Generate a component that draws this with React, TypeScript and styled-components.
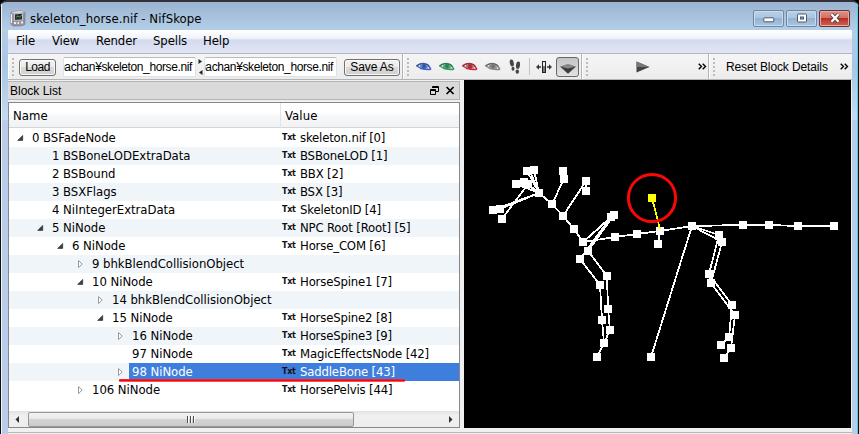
import React from 'react';
import styled, { createGlobalStyle, css } from 'styled-components';

const Global = createGlobalStyle`
  * { box-sizing: border-box; }
  body { margin: 0; overflow: hidden; background: #000; }
  svg { display: block; flex: none; }
`;

const ui = css`font-family: 'DejaVu Sans Condensed', 'DejaVu Sans', sans-serif; font-stretch: condensed;`;
const gothic = css`font-family: 'Liberation Sans', 'Noto Sans CJK JP', sans-serif;`;

const Window = styled.div`
  width: 859px;
  height: 434px;
  padding: 0 7px 0 8px;
  border-top: 2px solid #35313a;
  border-radius: 7px 7px 0 0;
  background:
    linear-gradient(#111, #111) 0 0 / 1px 100% no-repeat,
    linear-gradient(#eef4fb, #eef4fb) 1px 0 / 1px 100% no-repeat,
    linear-gradient(#111, #111) 858px 0 / 1px 100% no-repeat,
    linear-gradient(#4cd2e6, #4cd2e6) 857px 0 / 1px 100% no-repeat,
    linear-gradient(#9ab4d1 0, #b5cee7 28px, #a9c6e4 65px, #c5dbef 117px, #b9cde8 119px, #b9cde8 100%);
`;

const TitleBar = styled.div`
  height: 28px;
  display: flex;
  align-items: center;
  padding: 4px 2px 0 2px;
`;

const Title = styled.div`
  ${ui}
  font-size: 13px;
  line-height: 18px;
  letter-spacing: 0.07px;
  flex: 1;
  margin-left: 4px;
  padding-top: 2px;
  white-space: nowrap;
`;

const Caption = styled.button<{ $close?: boolean }>`
  width: 31px;
  height: 17px;
  margin: 0 0 0 2px;
  padding: 0;
  display: flex;
  align-items: center;
  justify-content: center;
  border: 1px solid ${p => (p.$close ? '#6d3038' : '#6c87a5')};
  border-radius: 2px;
  box-shadow: inset 0 0 0 1px ${p => (p.$close ? '#e5a9a0' : '#c9dcee')};
  background: ${p => (p.$close
    ? 'linear-gradient(#dc9388 0, #cf6f62 48%, #b93023 50%, #cc6554 100%)'
    : 'linear-gradient(#b9d0e7 0, #abc5df 48%, #94b1cf 50%, #a9c6e2 100%)')};
`;

const MenuBar = styled.div`
  height: 24px;
  display: flex;
  gap: 16px;
  padding: 2px 0 0 8px;
  border-bottom: 1px solid #b2b5c8;
  background: linear-gradient(#fff 0, #f0f3fa 8px, #e6eaf5 9px, #d5dbee 10px, #dfe4f4 22px);
`;

const MenuItem = styled.span<{ $w: number }>`
  ${ui}
  font-size: 13px;
  line-height: 18px;
  letter-spacing: -0.1px;
  width: ${p => p.$w}px;
  white-space: nowrap;
`;

const ToolRow = styled.div`
  height: 26px;
  display: flex;
  border-bottom: 1px solid #b4b4b4;
  background: linear-gradient(#f5f5f5, #ececec);
`;

const Bar = styled.div<{ $w: number }>`
  width: ${p => p.$w}px;
  height: 25px;
  display: flex;
  align-items: center;
  padding-left: 4px;
  border-right: 1px solid #b4b4b4;
  box-shadow: inset 1px 0 #fff;
  &:last-child { border-right: 0; }
`;

const Grip = styled.div`
  width: 2px;
  height: 18px;
  flex: none;
  margin-right: 1px;
  background: repeating-linear-gradient(#bcbcbc 0 2px, transparent 2px 4px);
`;

const PushButton = styled.button<{ $w: number; $ml: number; $ls: number }>`
  ${gothic}
  width: ${p => p.$w}px;
  height: 17px;
  flex: none;
  margin: 1px 0 0 ${p => p.$ml}px;
  padding: 0;
  font-size: 12px;
  line-height: 14px;
  letter-spacing: ${p => p.$ls}px;
  color: #000;
  border: 1px solid #707070;
  border-radius: 3px;
  box-shadow: inset 0 0 0 1px #fafafa;
  background: linear-gradient(#f2f2f2 0, #ebebeb 48%, #dadada 50%, #cfcfcf 100%);
`;

const PathInput = styled.div<{ $w: number; $ml: number }>`
  ${gothic}
  width: ${p => p.$w}px;
  height: 20px;
  flex: none;
  margin-left: ${p => p.$ml}px;
  padding-right: 3px;
  display: flex;
  justify-content: flex-end;
  overflow: hidden;
  font-size: 12px;
  line-height: 19px;
  letter-spacing: -0.38px;
  white-space: nowrap;
  color: #000;
  background: #fff;
  border: 1px solid #dfe3e8;
  border-top-color: #b8bac0;
  border-radius: 2px;
`;

const Slot = styled.div<{ $ml: number }>`margin-left: ${p => p.$ml}px;`;

const Divider = styled.div`
  width: 1px;
  height: 17px;
  margin-left: 8px;
  background: #c3c3c3;
`;

const Toggle = styled.div`
  width: 23px;
  height: 20px;
  margin-left: 4px;
  display: flex;
  align-items: center;
  justify-content: center;
  padding-top: 5px;
  border: 1px solid #686868;
  border-radius: 3px;
  background: linear-gradient(#c4c4c4, #e3e3e3);
`;

const Action = styled.span`
  ${gothic}
  font-size: 12px;
  letter-spacing: -0.12px;
  margin-left: 10px;
  width: 112px;
  white-space: nowrap;
`;

const Content = styled.div`
  height: 350px;
  display: flex;
  background: #f0f0f0;
`;

const Dock = styled.div`
  width: 456px;
  padding: 1px 4px 0 0;
  display: flex;
  flex-direction: column;
`;

const DockTitle = styled.div`
  ${gothic}
  height: 19px;
  display: flex;
  align-items: center;
  padding: 0 4px 0 2px;
  font-size: 12px;
  color: #000;
  background: #dadada;
  border: 1px solid #b5b5b5;
  border-left: 0;
  span { flex: 1; }
`;

const Tree = styled.div`
  ${ui}
  position: relative;
  margin-top: 2px;
  height: 326px;
  font-size: 13px;
  letter-spacing: -0.04px;
  color: #000;
  background: #fff;
  border: 1px solid #828790;
`;

const Columns = styled.div`
  height: 25px;
  display: grid;
  grid-template-columns: 271px 1fr;
  font-size: 13px;
  line-height: 25px;
  letter-spacing: 0.1px;
  border-bottom: 1px solid #d5d5d5;
  background: linear-gradient(#fff 0, #fff 45%, #f7f8fa 50%, #f1f2f4 100%);
  span { padding-left: 4px; }
  span + span { border-left: 1px solid #e0e3e8; }
`;

const Rows = styled.div`padding-top: 1px; height: 283px;`;

const Row = styled.div<{ $alt: boolean }>`
  height: 18px;
  display: grid;
  grid-template-columns: 271px 1fr;
  line-height: 17px;
  white-space: nowrap;
  background: ${p => (p.$alt ? '#f0f5fa' : '#fff')};
`;

const NameCell = styled.div<{ $depth: number }>`
  display: flex;
  padding-left: ${p => p.$depth * 20}px;
`;

const Expander = styled.div`
  width: 20px;
  padding: 4px 0 0 8px;
`;

const Label = styled.div<{ $on?: boolean }>`
  flex: 1;
  padding-left: 3px;
  ${p => p.$on && 'background: #3e7fde; color: #fff;'}
`;

const ValueCell = styled.div<{ $on?: boolean }>`
  display: flex;
  gap: 4px;
  letter-spacing: -0.17px;
  ${p => p.$on && 'background: #3e7fde; color: #fff;'}
`;

const TextTag = styled.b`
  font: bold 8px/17px 'DejaVu Sans', sans-serif;
  font-stretch: normal;
  letter-spacing: -0.3px;
  width: 14px;
  margin-left: 2px;
  color: #111;
`;

const Underline = styled.div`
  position: absolute;
  left: 110px;
  top: 276px;
  width: 286px;
  height: 3px;
  border-radius: 1px;
  background: linear-gradient(#f23a50, #fa0008 40%, #fa0008 60%, #ff8a8a);
`;

const ScrollBar = styled.div`
  height: 16px;
  display: flex;
  align-items: center;
  justify-content: space-between;
  padding: 0 6px;
  background: linear-gradient(#e3e3e3, #f0f0f0 30%, #ededed);
`;

const Thumb = styled.div`
  flex: 1;
  height: 15px;
  margin: 0 94px 0 8px;
  display: flex;
  align-items: center;
  justify-content: center;
  gap: 1px;
  border: 1px solid #979797;
  border-radius: 2px;
  background: linear-gradient(#f4f4f4 0, #e7e7e7 48%, #d4d4d4 50%, #cacaca 100%);
`;

const Ridge = styled.i`
  width: 2px;
  height: 7px;
  border-left: 1px solid #4b4b4b;
  border-right: 1px solid #fff;
`;

const Viewport = styled.div`
  width: 387px;
  height: 348px;
  background: #000;
`;

const Footer = styled.div`
  height: 4px;
  background: linear-gradient(#f0f0f0 0 2px, #b8b8b8 2px 3px, #f0f0f0 3px);
`;

function Eye({ color }: { color: string }) {
  return (
    <svg width="16" height="10" viewBox="0 0 16 10">
      <path d="M.8 4Q4 1.6 8 1.8T13 4.8L14.8 7.4Q9 8 5 6.8Q3 5 .8 4Z" fill="#e9eeee" />
      <ellipse cx="8" cy="4.6" rx="2.6" ry="2.8" fill={color} />
      <path d="M4.9 3v3.2M11 3.4v3.4" stroke="#3d5058" strokeWidth=".9" />
      <path d="M.4 4Q4.5 1.2 8.5 1.7T13.3 4.9L15 7.4" fill="none" stroke={color} strokeWidth="1.5" />
      <path d="M.4 4Q4.5 1.2 8.5 1.7T13.3 4.9" fill="none" stroke="#3c4448" strokeWidth="1" opacity=".6" />
      <path d="M.8 4.2Q3.4 5.2 5 6.7Q9 7.9 15 7.3" stroke={color} strokeWidth="1.3" fill="none" />
      <path d="M7.4 3h1.3v2.4H7.4z" fill="#26383e" opacity=".5" />
    </svg>
  );
}

function Chevrons() {
  return (
    <svg width="9" height="7" viewBox="0 0 9 7" fill="none" stroke="#000" strokeWidth="1.4">
      <path d="M.7.7l2.8 2.8L.7 6.3M4.7.7l2.8 2.8-2.8 2.8" />
    </svg>
  );
}

function Branch({ state }: { state?: string }) {
  if (!state) return null;
  return (
    <svg width="8" height="10" viewBox="0 0 8 10">
      {state === 'open'
        ? <path d="M5.7 2.4v5H.7Z" fill="#404040" stroke="#222" strokeWidth=".6" />
        : <path d="M1.5 1.6v7L5.2 5.1Z" fill="#fff" stroke="#9a9a9a" />}
    </svg>
  );
}

type Item = [number, string, string?, string?];
const items: Item[] = [
  [0, '0 BSFadeNode', 'skeleton.nif [0]', 'open'],
  [1, '1 BSBoneLODExtraData', 'BSBoneLOD [1]'],
  [1, '2 BSBound', 'BBX [2]'],
  [1, '3 BSXFlags', 'BSX [3]'],
  [1, '4 NiIntegerExtraData', 'SkeletonID [4]'],
  [1, '5 NiNode', 'NPC Root [Root] [5]', 'open'],
  [2, '6 NiNode', 'Horse_COM [6]', 'open'],
  [3, '9 bhkBlendCollisionObject', undefined, 'closed'],
  [3, '10 NiNode', 'HorseSpine1 [7]', 'open'],
  [4, '14 bhkBlendCollisionObject', undefined, 'closed'],
  [4, '15 NiNode', 'HorseSpine2 [8]', 'open'],
  [5, '16 NiNode', 'HorseSpine3 [9]', 'closed'],
  [5, '97 NiNode', 'MagicEffectsNode [42]'],
  [5, '98 NiNode', 'SaddleBone [43]', 'closed'],
  [3, '106 NiNode', 'HorsePelvis [44]', 'closed'],
];

const bones = [
  '539,193 527,171', '539,193 534,170', '539,193 530,171', '539,193 516,184', '539,193 524,182', '539,193 528,184',
  '539,193 500,209 493,210', '539,193 493,210', '528,184 502,219',
  '539,193 552,204 563,216 574,229 583,242', '552,204 564,179 563,171', '563,216 586,181 586,191',
  '583,242 615,237 637,234 660,231 692,226', '692,226 743,225 769,225 798,226 834,226',
  '583,242 611,217', '583,242 614,215', '588,251 614,215', '580,259 611,217',
  '588,251 607,276 608,309 610,330 604,343', '580,259 600,285 602,320 604,343 597,357',
  '660,231 658,244', '692,226 651,357', '692,226 719,235 709,274 732,305 729,337 721,345',
  '692,226 722,242 711,283 735,315 731,348 724,358', '692,226 719,235 722,242', '709,274 711,283',
];

const joints: [number, number][] = [
  [527, 171], [534, 170], [516, 184], [524, 182], [528, 184], [539, 193], [493, 210], [500, 209], [502, 219],
  [552, 204], [563, 171], [564, 179], [586, 181], [586, 191], [563, 216], [574, 229], [583, 242], [611, 217],
  [614, 215], [588, 251], [580, 259], [615, 237], [637, 234], [660, 231], [658, 244], [607, 276], [600, 285],
  [608, 309], [602, 320], [610, 330], [604, 343], [597, 357], [651, 357], [692, 226], [743, 225], [769, 225],
  [798, 226], [834, 226], [719, 235], [722, 242], [709, 274], [711, 283], [732, 305], [735, 315], [729, 337],
  [731, 348], [721, 345], [724, 358],
];

function Skeleton() {
  return (
    <svg width="387" height="348" viewBox="464 80 387 348" shapeRendering="crispEdges">
      <g fill="none" stroke="#fff" strokeWidth="1.8">
        {bones.map((b, i) => <polyline key={i} points={b} />)}
      </g>
      {joints.map(([x, y], i) => <rect key={i} x={x - 4} y={y - 4} width="8" height="8" fill="#fff" />)}
      <path d="M652 198L660 229" stroke="#ff0" strokeWidth="1.8" />
      <rect x="648" y="194" width="8" height="8" fill="#ff0" />
      <circle cx="652" cy="198" r="23.6" fill="none" stroke="#f80808" strokeWidth="3" shapeRendering="auto" />
    </svg>
  );
}

export default function App() {
  return (
    <>
      <Global />
      <Window>
        <TitleBar>
          <svg width="16" height="17" viewBox="0 0 16 17">
            <path d="M1 2L11 .8l4 1.5v12l-3 1.4-9 .4-2-2Z" fill="#98949f" stroke="#756f82" strokeWidth=".6" />
            <path d="M1 2L11 .8l4 1.5L4 3.6Z" fill="#dad7e2" />
            <path d="M4.5 4l8-.8v6.6l-8 .6Z" fill="#203027" stroke="#d9d6df" strokeWidth=".8" />
            <path d="M6 7.5l2-1.7 1.2 1.5L12 5" stroke="#5c9b72" fill="none" />
            <path d="M4 12h2v2H4zM7.5 12h1.5v2H7.5zM11 11.5h2v2h-2z" fill="#eceaf0" />
            <path d="M1.5 4v9" stroke="#f2f0f5" />
          </svg>
          <Title>skeleton_horse.nif - NifSkope</Title>
          <Caption>
            <svg width="12" height="9" viewBox="0 0 12 9"><rect x=".8" y="3.8" width="10" height="4" rx=".8" fill="#fff" stroke="#4b596b" /></svg>
          </Caption>
          <Caption>
            <svg width="12" height="10" viewBox="0 0 12 10">
              <rect x="1.5" y="1" width="9" height="8" rx=".8" fill="#fff" stroke="#4b596b" />
              <rect x="4.5" y="4" width="3" height="2" fill="#8ba6c2" stroke="#4b596b" />
            </svg>
          </Caption>
          <Caption $close>
            <svg width="12" height="10" viewBox="0 0 12 10">
              <path d="M2.5 1.3l7 7.4M9.5 1.3l-7 7.4" stroke="#523d49" strokeWidth="4" />
              <path d="M2.5 1.3l7 7.4M9.5 1.3l-7 7.4" stroke="#fff" strokeWidth="2.3" />
            </svg>
          </Caption>
        </TitleBar>
        <MenuBar>
          <MenuItem $w={20}>File</MenuItem>
          <MenuItem $w={28}>View</MenuItem>
          <MenuItem $w={41}>Render</MenuItem>
          <MenuItem $w={34}>Spells</MenuItem>
          <MenuItem $w={28}>Help</MenuItem>
        </MenuBar>
        <ToolRow>
          <Bar $w={395}>
            <Grip />
            <PushButton $w={37} $ml={4} $ls={-0.5}>Load</PushButton>
            <PathInput $w={133} $ml={7}>pachan¥skeleton_horse.nif</PathInput>
            <Slot $ml={2}>
              <svg width="5" height="16" viewBox="0 0 5 16" fill="#222"><path d="M.5 0v5L4 2.5ZM4.5 11v5L1 13.5Z" /></svg>
            </Slot>
            <PathInput $w={133} $ml={1}>pachan¥skeleton_horse.nif</PathInput>
            <PushButton $w={56} $ml={7} $ls={-0.1}>Save As</PushButton>
          </Bar>
          <Bar $w={179}>
            <Grip />
            <Slot $ml={6}><Eye color="#3a63cc" /></Slot>
            <Slot $ml={7}><Eye color="#2d9f5c" /></Slot>
            <Slot $ml={7}><Eye color="#d02a34" /></Slot>
            <Slot $ml={7}><Eye color="#858585" /></Slot>
            <Slot $ml={8}>
              <svg width="12" height="16" viewBox="0 0 12 16" fill="#444">
                <ellipse cx="2.8" cy="4" rx="2" ry="3.5" transform="rotate(-10 2.8 4)" />
                <ellipse cx="4" cy="9.7" rx="1.5" ry="2" />
                <ellipse cx="9" cy="6.2" rx="2" ry="3.7" transform="rotate(8 9 6.2)" />
                <ellipse cx="8.3" cy="12.6" rx="1.7" ry="2.2" />
              </svg>
            </Slot>
            <Divider />
            <Slot $ml={6}>
              <svg width="16" height="14" viewBox="0 0 16 14">
                <path d="M0 7l3-2.7v2h2v1.4H3v2ZM16 7l-3-2.7v2h-2v1.4h2v2Z" fill="#333" />
                <rect x="6.5" y="1.5" width="3" height="11" fill="#777" stroke="#222" />
                <path d="M7 2h2v4H7z" fill="#eee" />
              </svg>
            </Slot>
            <Toggle>
              <svg width="16" height="10" viewBox="0 0 16 10">
                <path d="M0 2.5L8 0l8 2.5L8 5Z" fill="#929292" />
                <path d="M0 2.5h16L8 9.8Z" fill="#3c3c3c" />
                <path d="M0 2.5L8 0l8 2.5-8 2Z" fill="#888" />
              </svg>
            </Toggle>
          </Bar>
          <Bar $w={127}>
            <Grip />
            <Slot $ml={47}>
              <svg width="14" height="12" viewBox="0 0 14 12"><path d="M.5.5v11L13.5 6Z" fill="#444" /><path d="M.5.5v5.5h13Z" fill="#777" /></svg>
            </Slot>
            <Slot $ml={48}><Chevrons /></Slot>
          </Bar>
          <Bar $w={143}>
            <Grip />
            <Action>Reset Block Details</Action>
            <Slot $ml={2}><Chevrons /></Slot>
          </Bar>
        </ToolRow>
        <Content>
          <Dock>
            <DockTitle>
              <span>Block List</span>
              <svg width="25" height="9" viewBox="0 0 25 9" fill="none" stroke="#000">
                <path d="M2.5 2V.5h6v5H6M2.5 1.5h6M.5 3.5h5v5h-5zM.5 4.5h5" />
                <path d="M16.6 1l7 7M23.6 1l-7 7" strokeWidth="1.7" />
              </svg>
            </DockTitle>
            <Tree>
              <Columns><span>Name</span><span>Value</span></Columns>
              <Rows>
                {items.map(([depth, name, value, state], i) => {
                  const on = i === 13;
                  return (
                    <Row key={name} $alt={i % 2 === 1}>
                      <NameCell $depth={depth}>
                        <Expander><Branch state={state} /></Expander>
                        <Label $on={on}>{name}</Label>
                      </NameCell>
                      <ValueCell $on={on}>{value && <><TextTag>Txt</TextTag>{value}</>}</ValueCell>
                    </Row>
                  );
                })}
              </Rows>
              <ScrollBar>
                <svg width="5" height="7" viewBox="0 0 5 7"><path d="M4 0v7L.5 3.5Z" fill="#333" /></svg>
                <Thumb><Ridge /><Ridge /><Ridge /></Thumb>
                <svg width="5" height="7" viewBox="0 0 5 7"><path d="M1 0v7l3.5-3.5Z" fill="#333" /></svg>
              </ScrollBar>
              <Underline />
            </Tree>
          </Dock>
          <Viewport><Skeleton /></Viewport>
        </Content>
        <Footer />
      </Window>
    </>
  );
}
